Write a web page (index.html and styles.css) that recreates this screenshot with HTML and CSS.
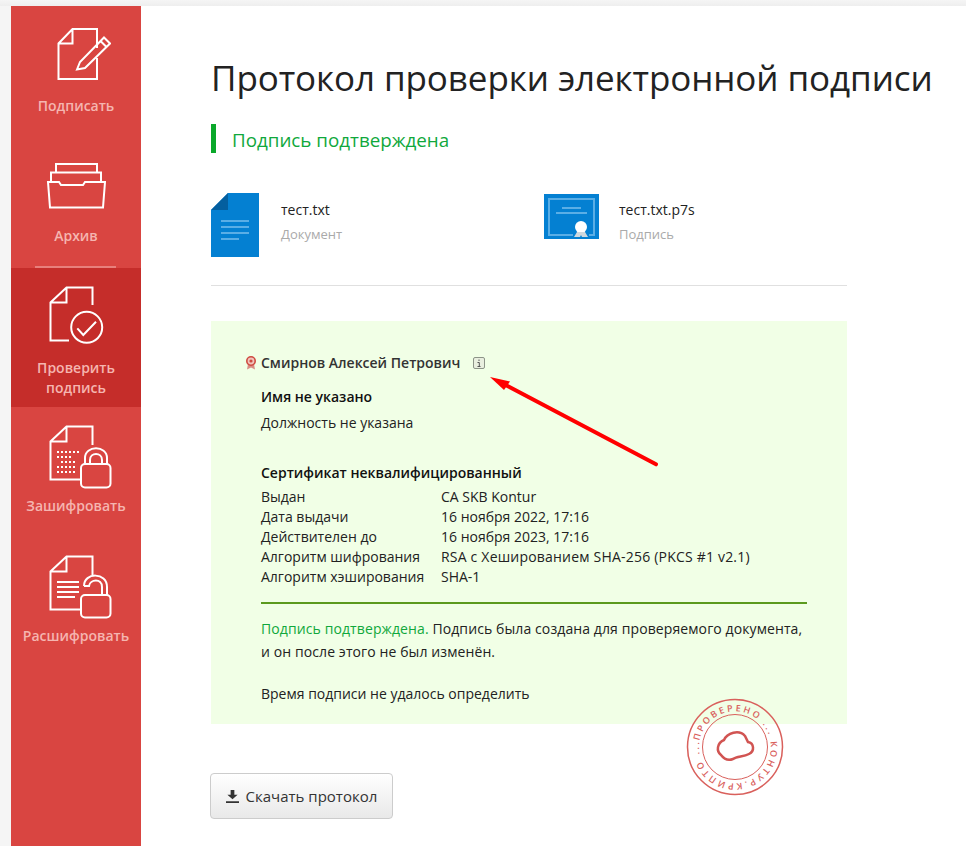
FILE: index.html
```html
<!DOCTYPE html>
<html lang="ru">
<head>
    <meta charset="UTF-8">
    <meta name="viewport" content="width=device-width, initial-scale=1.0">
    <title>Протокол проверки электронной подписи</title>
    <link rel="stylesheet" href="styles.css">
</head>
<body>
    <div class="page">
        <nav class="sidebar">
            <a class="nav-item nav-sign">
                <svg class="nav-icon" width="54" height="53" viewBox="0 0 54 53">
                    <path d="M40 21 V2 H15.500 L1.500 16.500 V52 H40 V31 M1.500 16.500 H15.500 V2"/>
                    <path d="M20 42.500 L23 35 L47 10.500 L53 16.500 L28 41 Z M43.500 14 L49.500 20"/>
                </svg>
                <span>Подписать</span>
            </a>
            <a class="nav-item nav-archive">
                <svg class="nav-icon" width="60" height="47" viewBox="0 0 60 47">
                    <path d="M10 10 V2 H51 V10 M5 19 V10.500 H55 V19"/>
                    <path d="M2 20 H13 L15 23 H37 L39 20 H59 L57 45.500 H4 Z"/>
                </svg>
                <span>Архив</span>
            </a>
            <a class="nav-item nav-check active">
                <svg class="nav-icon" width="56" height="60" viewBox="0 0 56 60">
                    <path d="M20 54.500 H1.500 V16.500 L17.500 1.500 H43.500 V19 M1.500 16.500 H17.500 V1.500"/>
                    <circle cx="37.700" cy="41.300" r="15.500"/>
                    <path d="M28.300 42.300 L34.300 49 L47 35.700"/>
                </svg>
                <span>Проверить<br>подпись</span>
            </a>
            <a class="nav-item nav-encrypt">
                <svg class="nav-icon" width="63" height="64" viewBox="0 0 63 64">
                    <path d="M31 54.500 H1.500 V16.500 L17.500 1.500 H43.500 V20 M1.500 16.500 H17.500 V1.500"/>
                    <path class="dots" d="M8 27 H30 M8 32 H24 M12 37 H28 M8 42 H26 M8 47 H26"/>
                    <rect x="32" y="39" width="29.500" height="23.500" rx="4"/>
                    <path d="M36 39 V33 C36 20 58 20 58 33 V39 M41 39 V35 C41 27 53 27 53 35 V39"/>
                </svg>
                <span>Зашифровать</span>
            </a>
            <a class="nav-item nav-decrypt">
                <svg class="nav-icon" width="63" height="64" viewBox="0 0 63 64">
                    <path d="M31 54.500 H1.500 V16.500 L17.500 1.500 H43.500 V20 M1.500 16.500 H17.500 V1.500"/>
                    <path d="M8 27 H30 M8 32 H30 M8 37 H30 M8 42 H26"/>
                    <rect x="32" y="40" width="29.500" height="22.500" rx="4"/>
                    <path d="M35 31 C35 17 58 17 58 32 V40 M35 31 H40 C41 24 53 23 53 32 V40"/>
                </svg>
                <span>Расшифровать</span>
            </a>
        </nav>

        <main class="content">
            <h1 class="title">Протокол проверки электронной подписи</h1>
            <div class="status">Подпись подтверждена</div>

            <div class="files">
                <div class="file">
                    <svg width="48" height="64" viewBox="0 0 48 64">
                        <path d="M17 0 H48 V64 H0 V17 Z" fill="#0480d2"/>
                        <path d="M17 0 V17 H0 Z" fill="#045f9f"/>
                        <path d="M10 28 H38 M10 34 H38 M10 40 H38 M10 46 H28" stroke="#5aaee6" stroke-width="2"/>
                    </svg>
                    <div class="file-text">
                        <div class="file-name">тест.txt</div>
                        <div class="file-type">Документ</div>
                    </div>
                </div>
                <div class="file file-sign">
                    <svg width="55" height="45" viewBox="0 0 55 45">
                        <rect width="55" height="45" fill="#0480d2"/>
                        <path d="M29 41 H5 V5 H50 V41 H45" fill="none" stroke="#5aaee6" stroke-width="2"/>
                        <path d="M18 14 H37 M12 19 H43" stroke="#5aaee6" stroke-width="2"/>
                        <circle cx="37" cy="33" r="6" fill="#fff"/>
                        <path d="M33 38 L30 43 H36 L37 41 L38 43 H44 L41 38 Z" fill="#cfd8de"/>
                    </svg>
                    <div class="file-text">
                        <div class="file-name">тест.txt.p7s</div>
                        <div class="file-type">Подпись</div>
                    </div>
                </div>
            </div>

            <section class="report">
                <div class="signer">
                    <svg class="medal" width="12" height="14" viewBox="0 0 12 14">
                        <path d="M3 8 L2 13.500 L6 11.500 L10 13.500 L9 8 Z" fill="#d98c84"/>
                        <circle cx="6" cy="5" r="4.200" fill="#f0c4bc" stroke="#cf4a40" stroke-width="1.600"/>
                        <circle cx="6" cy="5" r="1.600" fill="#cf4a40"/>
                    </svg>
                    <span class="signer-name">Смирнов Алексей Петрович</span>
                    <svg class="info" width="12" height="12" viewBox="0 0 12 12">
                        <rect x="0.500" y="0.500" width="11" height="11" rx="1.500" fill="#e9efdf" stroke="#8d9488"/>
                        <path d="M6 2.500 V4 M4.500 5.500 H6.300 V9 M4.500 9.500 H7.500" fill="none" stroke="#555"/>
                    </svg>
                </div>
                <div class="owner">
                    <div class="owner-name">Имя не указано</div>
                    <div class="owner-post">Должность не указана</div>
                </div>
                <div class="cert">
                    <div class="cert-title">Сертификат неквалифицированный</div>
                    <dl class="cert-list">
                        <dt>Выдан</dt><dd>CA SKB Kontur</dd>
                        <dt>Дата выдачи</dt><dd>16 ноября 2022, 17:16</dd>
                        <dt>Действителен до</dt><dd>16 ноября 2023, 17:16</dd>
                        <dt>Алгоритм шифрования</dt><dd class="cert-long">RSA с Хешированием SHA-256 (PKCS #1 v2.1)</dd>
                        <dt>Алгоритм хэширования</dt><dd>SHA-1</dd>
                    </dl>
                </div>
                <div class="result">
                    <p class="result-text"><span class="ok">Подпись подтверждена.</span> Подпись была создана для проверяемого документа,<br>и он после этого не был изменён.</p>
                    <p class="time">Время подписи не удалось определить</p>
                </div>
            </section>

            <button class="download">
                <svg width="13" height="13" viewBox="0 0 14 14">
                    <path d="M5 0 H9 V5 H12.500 L7 10 L1.500 5 H5 Z M0 12 H14 V14 H0 Z" fill="#333"/>
                </svg>
                Скачать протокол
            </button>
        </main>
    </div>

    <!-- стрелка и печать лежат поверх страницы -->
    <svg class="arrow" width="190" height="110" viewBox="0 0 190 110">
        <path d="M27 20.700 L176 99.300" fill="none" stroke="#f00" stroke-width="4" stroke-linecap="round"/>
        <path d="M10 12 L30 16.500 L24 25 Z" fill="#f00"/>
    </svg>
    <svg class="stamp" width="100" height="100" viewBox="0 0 100 100">
        <circle cx="50" cy="50" r="47.500" fill="none" stroke="#d9605c" stroke-width="1.500"/>
        <circle cx="50" cy="50" r="32.500" fill="none" stroke="#d9605c" stroke-width="1"/>
        <path d="M36 58 C31 54 32 46 39 43 C42 36 54 32 60 39 C61 41 62 43 63 45 C69 46 70 54 64 57 C58 60 52 59 48 62 C43 64 39 62 36 58 Z" fill="none" stroke="#d15452" stroke-width="2.500"/>
        <defs>
            <path id="stamp-ring" d="M14.550 43.750 A36 36 0 1 1 14.440 44.370"/>
        </defs>
        <text class="stamp-text"><textPath href="#stamp-ring" textLength="224">ПРОВЕРЕНО ... КОНТУР.КРИПТО ...</textPath></text>
    </svg>
</body>
</html>
```

FILE: styles.css
```css
* {
    margin: 0;
    padding: 0;
    box-sizing: border-box;
}

body {
    font-family: "Open Sans", "Noto Sans", sans-serif;
    font-size: 14px;
    line-height: 20px;
    color: #222;
    background: #fff;
    height: 846px;
    overflow: hidden;
    position: relative;
}

.page {
    display: flex;
    height: 846px;
    padding-top: 6px;
    background: linear-gradient(#f5f5f5, #eeeeee) top left / 100% 6px no-repeat,
                linear-gradient(#f5f5f5, #f5f5f5) top left / 11px 100% no-repeat;
}

/* левое меню */
.sidebar {
    flex: 0 0 130px;
    margin-left: 11px;
    background: #d94541;
    color: #f5b5b0;
}

.nav-item {
    display: flex;
    flex-direction: column;
    align-items: center;
    font-size: 14px;
    font-weight: 600;
    text-align: center;
}

.nav-icon {
    align-self: flex-start;
    margin-left: 38px;
    fill: none;
    stroke: #fff;
    stroke-width: 2;
}

.nav-icon .dots {
    stroke-dasharray: 2 2;
}

.nav-sign {
    height: 130px;
    padding-top: 21px;
}

.nav-sign .nav-icon {
    margin-left: 46px;
}

.nav-sign span {
    margin-top: 16px;
}

.nav-archive {
    height: 132px;
    padding-top: 26px;
    position: relative;
}

.nav-archive .nav-icon {
    margin-left: 35px;
}

.nav-archive span {
    margin-top: 17px;
}

.nav-archive::after {
    content: "";
    position: absolute;
    left: 24px;
    right: 25px;
    bottom: 0;
    height: 2px;
    background: #e8807c;
}

.nav-check {
    height: 139px;
    padding-top: 18px;
}

.nav-check span {
    margin-top: 12px;
}

.nav-item.active {
    background: #c52d2a;
}

.nav-encrypt {
    height: 130px;
    padding-top: 18px;
}

.nav-decrypt {
    padding-top: 18px;
}

.nav-encrypt span,
.nav-decrypt span {
    margin-top: 7px;
}

/* основная часть */
.content {
    flex: 1;
    padding-left: 70px;
    min-width: 0;
}

.title {
    font-size: 35px;
    font-weight: 400;
    letter-spacing: -0.090px;
    line-height: 48px;
    margin-top: 48px;
    color: #222;
    white-space: nowrap;
}

.status {
    margin-top: 22px;
    height: 29px;
    line-height: 33px;
    padding-left: 16px;
    border-left: 5px solid #0aa82a;
    font-size: 18.800px;
    color: #10a83c;
}

.files {
    display: flex;
    width: 636px;
    margin-top: 40px;
    height: 93px;
    border-bottom: 1px solid #e0e0e0;
}

.file {
    display: flex;
    flex: 0 0 333px;
}

.file-sign svg {
    margin-top: 1px;
}

.file-sign .file-text {
    margin-left: 20px;
}

.file-text {
    margin-left: 22px;
    padding-top: 6px;
}

.file-name {
    color: #222;
    line-height: 22px;
}

.file-type {
    color: #aaa;
    font-size: 13px;
    line-height: 26px;
}

/* блок результата */
.report {
    width: 636px;
    height: 403px;
    margin-top: 35px;
    padding: 32px 40px 0 50px;
    background: #f1ffe6;
}

.signer {
    display: flex;
    align-items: center;
    margin-left: -16px;
    font-weight: 600;
    color: #333;
}

.signer-name {
    margin-left: 4px;
}

.info {
    margin-left: 13px;
}

.owner {
    margin-top: 14px;
}

.owner-name {
    font-weight: 600;
    color: #111;
}

.owner-post {
    margin-top: 6px;
}

.cert {
    margin-top: 30px;
}

.cert-title {
    font-weight: 600;
    color: #111;
    margin-bottom: 4px;
}

.cert-list {
    display: grid;
    grid-template-columns: 180px 1fr;
}

.cert-long {
    letter-spacing: 0.200px;
}

.result {
    margin-top: 15px;
    padding-top: 13px;
    border-top: 2px solid #5b9a1e;
    line-height: 23px;
}

.result-text {
    letter-spacing: 0.100px;
    white-space: nowrap;
}

.ok {
    color: #10a83c;
}

.time {
    margin-top: 19px;
}

.download {
    display: block;
    margin-top: 49px;
    margin-left: -1px;
    width: 183px;
    height: 46px;
    font: inherit;
    font-size: 15px;
    color: #333;
    background: linear-gradient(#fff, #e9e9e9);
    border: 1px solid #ccc;
    border-radius: 4px;
}

.download svg {
    margin-right: 3px;
    vertical-align: -1px;
}

.arrow {
    position: absolute;
    left: 480px;
    top: 365px;
}

.stamp {
    position: absolute;
    left: 685px;
    top: 697px;
}

.stamp-text {
    font-size: 9px;
    font-weight: 600;
    fill: #d9605c;
}
```
